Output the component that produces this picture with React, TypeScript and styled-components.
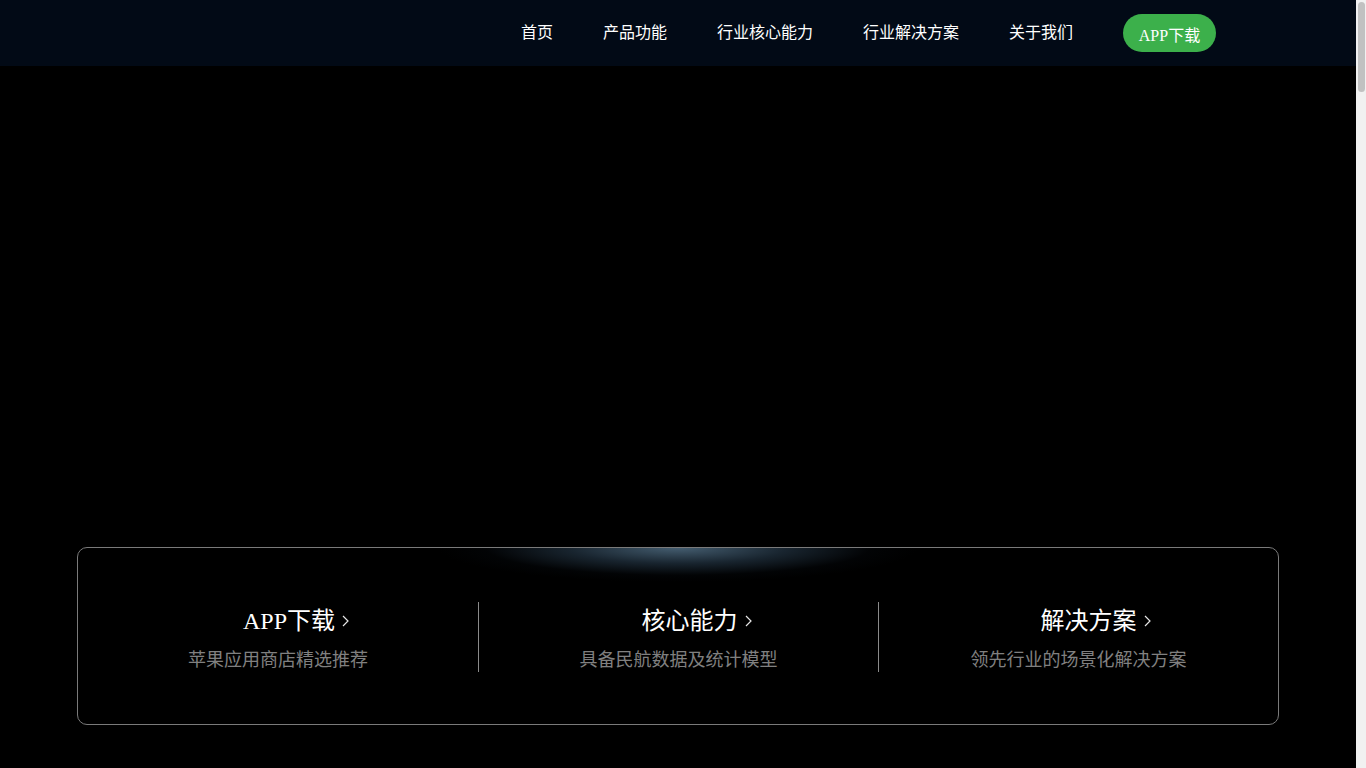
import React from "react";
import styled, { createGlobalStyle } from "styled-components";

const Global = createGlobalStyle`
  html, body { margin: 0; padding: 0; background: #000; }
  body { font-family: "Liberation Serif", "Noto Sans CJK SC", serif; color: #fff; }
  * { box-sizing: border-box; }
`;

const Page = styled.div`
  width: calc(100% - 10px);
  min-height: 6500px;
  background: #000;
`;

const ScrollTrack = styled.div`
  position: fixed;
  top: 0;
  right: 0;
  width: 10px;
  height: 100vh;
  background: #f1f1f1;
  display: flex;
  justify-content: center;
  padding-top: 2px;
`;

const ScrollThumb = styled.div`
  width: 7px;
  height: 90px;
  border-radius: 4px;
  background: #c1c1c1;
`;

const Header = styled.header`
  height: 66px;
  background: #020a16;
  display: flex;
  align-items: center;
  justify-content: flex-end;
  padding-right: 140px;
`;

const Nav = styled.nav`
  display: flex;
  align-items: center;
  gap: 50px;
`;

const NavLink = styled.a`
  font-size: 16px;
  line-height: 22px;
  color: #fff;
  text-decoration: none;
  cursor: pointer;
`;

const DownloadButton = styled.a`
  display: flex;
  align-items: center;
  justify-content: center;
  width: 93px;
  height: 38px;
  border-radius: 19px;
  background: #3cb04b;
  color: #fff;
  font-size: 16px;
  padding-top: 2px;
  text-decoration: none;
  cursor: pointer;
`;

const Hero = styled.section`
  padding-top: 481px;
`;

const Card = styled.div`
  position: relative;
  width: 1202px;
  height: 178px;
  margin-left: calc(50% - 601px);
  border: 1px solid #7a7a7a;
  border-radius: 10px;
  display: grid;
  grid-template-columns: repeat(3, 1fr);
  padding: 54px 0;
  overflow: hidden;
`;

const Glow = styled.div`
  position: absolute;
  top: 0;
  left: 50%;
  width: 480px;
  height: 68px;
  margin-left: -240px;
  margin-top: -34px;
  background: radial-gradient(
    ellipse 50% 50% at 50% 50%,
    rgba(110, 150, 180, 0.62) 0%,
    rgba(70, 105, 135, 0.35) 45%,
    rgba(20, 35, 50, 0.1) 80%,
    rgba(0, 0, 0, 0) 100%
  );
  pointer-events: none;
`;

const Column = styled.div<{ $divider?: boolean }>`
  display: flex;
  flex-direction: column;
  align-items: center;
  gap: 8px;
  border-left: ${(p) => (p.$divider ? "1px solid #8a8a8a" : "none")};
`;

const Title = styled.a<{ $shift: number }>`
  display: flex;
  align-items: center;
  gap: 7px;
  font-size: 24px;
  line-height: 38px;
  color: #fff;
  text-decoration: none;
  margin-left: ${(p) => p.$shift}px;
  cursor: pointer;
`;

const Subtitle = styled.div`
  font-size: 18px;
  line-height: 24px;
  color: #808080;
`;

const Chevron = () => (
  <svg width="7" height="12" viewBox="0 0 7 12" fill="none">
    <path d="M1 1 L6 6 L1 11" stroke="#e6e6e6" strokeWidth="1.2" />
  </svg>
);

const items = [
  { title: "APP下载", sub: "苹果应用商店精选推荐", shift: 36 },
  { title: "核心能力", sub: "具备民航数据及统计模型", shift: 36 },
  { title: "解决方案", sub: "领先行业的场景化解决方案", shift: 34 },
];

export default function App() {
  return (
    <>
      <Global />
      <Page>
        <Header>
          <Nav>
            <NavLink>首页</NavLink>
            <NavLink>产品功能</NavLink>
            <NavLink>行业核心能力</NavLink>
            <NavLink>行业解决方案</NavLink>
            <NavLink>关于我们</NavLink>
            <DownloadButton>APP下载</DownloadButton>
          </Nav>
        </Header>
        <Hero>
          <Card>
            <Glow />
            {items.map((it, i) => (
              <Column key={it.title} $divider={i > 0}>
                <Title $shift={it.shift}>
                  {it.title}
                  <Chevron />
                </Title>
                <Subtitle>{it.sub}</Subtitle>
              </Column>
            ))}
          </Card>
        </Hero>
      </Page>
      <ScrollTrack>
        <ScrollThumb />
      </ScrollTrack>
    </>
  );
}
